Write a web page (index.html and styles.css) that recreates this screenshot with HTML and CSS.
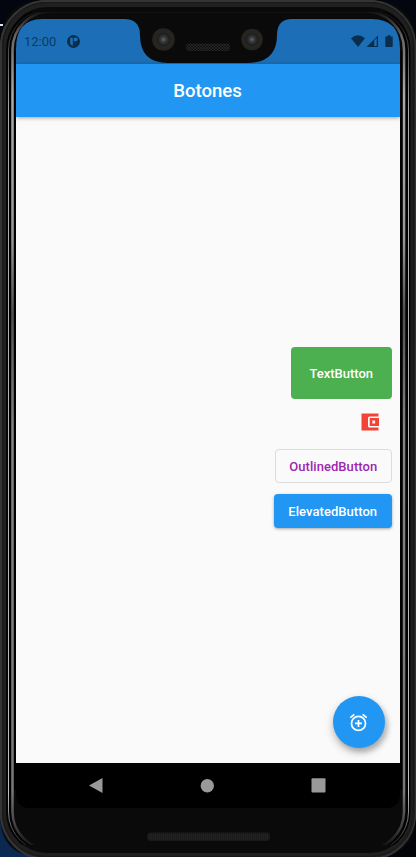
FILE: index.html
```
<!DOCTYPE html>
<html lang="es">
<head>
<meta charset="utf-8">
<title>Botones</title>
<link rel="stylesheet" href="styles.css">
</head>
<body>
<div class="phone">
  <div class="screen">
    <div class="status">
      <span class="time">12:00</span>
      <svg class="badge" width="13" height="13" viewBox="0 0 13 13"><circle cx="6.500" cy="6.500" r="6.500" fill="#082f4d"/><path d="M3.200 2.800h2.600v8q-2.600-.5-2.600-2.800zM6.800 2.800h2.700q1.200.3 1.200 1.700 0 1.800-1.900 1.800h-2z" fill="#1c6fb6"/></svg>
      <span class="spacer"></span>
      <svg class="system" width="42" height="13" viewBox="0 0 42 13" fill="#082f4d"><path d="M0 3.200Q7-2.600 14 3.200L7 12z"/><path fill-rule="evenodd" d="M15.500 12L27 .5V12zM23.300 5.300V11h2.400V3z"/><path d="M34.800 1.500h1.700V.3h3v1.200h1.700q.5 0 .5.500v9.500q0 .5-.5.500h-6.400q-.5 0-.5-.5V2q0-.5.500-.5z"/></svg>
    </div>
    <header class="appbar"><h1>Botones</h1></header>
    <main class="content">
      <button class="btn text">TextButton</button>
      <button class="wallet" aria-label="Cartera"><svg width="18" height="18" viewBox="0 0 18 18"><path d="M.5.500H17.500V3.500H8.500Q7 3.500 7 5v8q0 1.500 1.500 1.500h9v3H.5z" fill="#f44336"/><path fill-rule="evenodd" d="M8.700 5H18v8H8.700zM11.300 7.600v2.800h2.800V7.600z" fill="#f44336"/></svg></button>
      <button class="btn outlined">OutlinedButton</button>
      <button class="btn elevated">ElevatedButton</button>
      <button class="fab" aria-label="Alarma"><svg width="21" height="21" viewBox="0 0 24 24" fill="#fff"><path d="M7.880 3.390L6.600 1.860 2 5.710l1.290 1.530 4.590-3.850zM22 5.720l-4.600-3.860-1.290 1.530 4.600 3.860L22 5.720zM12 4a9 9 0 1 0 0 18 9 9 0 0 0 0-18zm0 16a7 7 0 1 1 0-14 7 7 0 0 1 0 14zm1-11h-2v3H8v2h3v3h2v-3h3v-2h-3V9z"/></svg></button>
    </main>
    <nav class="nav">
      <svg width="14" height="16" viewBox="0 0 14 16"><path d="M0 7.500L13.500 0v15z" fill="#999"/></svg>
      <svg width="14" height="14" viewBox="0 0 14 14"><circle cx="7.300" cy="6.700" r="6.700" fill="#999"/></svg>
      <svg width="15" height="15" viewBox="0 0 15 15"><rect x=".5" y=".3" width="14" height="14.300" rx="1" fill="#999"/></svg>
    </nav>
  </div>
  <svg class="frame" width="416" height="857" viewBox="0 0 416 857">
    <defs>
      <linearGradient id="shine" gradientUnits="userSpaceOnUse" x1="0" y1="11" x2="0" y2="850"><stop offset="0" stop-color="#111"/><stop offset=".03" stop-color="#666"/><stop offset=".1" stop-color="#aaa"/><stop offset=".27" stop-color="#999"/><stop offset=".36" stop-color="#505050"/><stop offset=".5" stop-color="#858585"/><stop offset=".93" stop-color="#777"/><stop offset=".98" stop-color="#333"/><stop offset="1" stop-color="#090909"/></linearGradient>
      <linearGradient id="thin" gradientUnits="userSpaceOnUse" x1="0" y1="10" x2="0" y2="852"><stop offset="0" stop-color="#111"/><stop offset=".12" stop-color="#aaa"/><stop offset=".93" stop-color="#c0c0c0"/><stop offset="1" stop-color="#181818"/></linearGradient>
      <pattern id="mesh" width="3" height="3" patternUnits="userSpaceOnUse"><rect width="3" height="3" fill="#0f0f0f"/><path d="M0 0l3 3M3 0L0 3" stroke="#303030" stroke-width=".6"/></pattern>
      <radialGradient id="lens"><stop offset="0" stop-color="#6b625f"/><stop offset=".25" stop-color="#34383a"/><stop offset=".55" stop-color="#1b1d1e"/><stop offset=".65" stop-color="#292622"/><stop offset="1" stop-color="#26221d"/></radialGradient>
      <clipPath id="sides"><path d="M0 12H416V845H0z"/></clipPath>
    </defs>
    <path fill="#0a0a0a" fill-rule="evenodd" d="M46 0H370Q416 0 416 46V814Q416 857 373 857H42Q0 857 0 814V46Q0 0 46 0zM16 49Q16 19 42 19H124Q140 19 140 35Q140 63 168 63H247Q277 63 277 35Q277 19 292 19H372Q400 19 400 49V794Q400 808 386 808H30Q16 808 16 794z"/>
    <g fill="none">
      <rect x="1" y="1" width="414" height="858" rx="46" stroke="#343434" stroke-width="2.500"/>
      <rect x="4.500" y="4.500" width="408" height="851" rx="43" stroke="#202020" stroke-width="5"/>
      <rect x="2.800" y="2.500" width="410.500" height="854" rx="44" stroke="#151515" stroke-width=".8"/>
      <g clip-path="url(#sides)">
        <rect x="7" y="9" width="402.500" height="844" rx="41" stroke="#050505" stroke-width="2"/>
        <rect x="10" y="10.500" width="397" height="841" rx="39" stroke="#020202" stroke-width="2"/>
        <rect x="8.500" y="10" width="400" height="842" rx="40" stroke="url(#thin)"/>
        <rect x="12.500" y="11.500" width="391.500" height="838" rx="38" stroke="url(#shine)" stroke-width="2.500"/>
        <path d="M15 51V790M401.300 51V790" stroke="#000" stroke-width="2"/>
      </g>
    </g>
    <circle cx="163.500" cy="39.500" r="11.300" fill="url(#lens)"/><circle cx="252" cy="39.500" r="10.800" fill="url(#lens)"/>
    <rect x="186" y="43.500" width="44" height="7.500" rx="3" fill="url(#mesh)"/>
    <rect x="147" y="832.500" width="123" height="8.500" rx="4" fill="#1a1a1a"/><path d="M149 836.700H268" stroke="#232323" stroke-width="6" stroke-dasharray="1 1"/>
  </svg>
</div>
</body>
</html>
```
FILE: styles.css
```
* { box-sizing: border-box; }
body {
  margin: 0;
  width: 416px;
  height: 857px;
  overflow: hidden;
  background: linear-gradient(#03060f 0, #01030a 50%, #0b2850 97%);
  font-family: Roboto, "Liberation Sans", sans-serif;
}
body::before {
  content: "";
  position: absolute;
  left: 0;
  top: 24px;
  width: 3px;
  height: 2px;
  background: #dce6f5;
}
body::after {
  content: "";
  position: absolute;
  right: 0;
  bottom: 0;
  width: 40px;
  height: 40px;
  background: #02040a;
}
.phone { position: relative; height: 857px; padding: 19px 16px 49px; }
.frame { position: absolute; inset: 0; z-index: 2; pointer-events: none; }
.screen { display: flex; flex-direction: column; height: 789px; background: #fafafa; }
.status {
  display: flex;
  align-items: center;
  height: 45px;
  padding: 0 8px;
  background: #1c6fb6;
  color: #0b3a62;
}
.time { width: 42.500px; padding-top: 1px; font-size: 13px; line-height: 16px; }
.spacer { flex: 1; }
.system { margin-right: -1px; }
.appbar {
  display: flex;
  flex: none;
  align-items: center;
  justify-content: center;
  height: 53px;
  padding: 1px 1px 0 0;
  background: #2196f3;
  color: #fff;
  box-shadow: 0 1px 4px rgba(0, 0, 0, .35);
}
.appbar h1 { margin: 0; font-size: 18.600px; font-weight: 500; line-height: 24px; }
.content {
  display: flex;
  flex: 1;
  flex-direction: column;
  align-items: flex-end;
  padding: 230px 8px 0 0;
}
button { display: flex; align-items: center; justify-content: center; padding: 0; border: 0; background: none; }
.btn { border-radius: 4px; font: 500 13px/16px Roboto, "Liberation Sans", sans-serif; }
.text { width: 101.500px; height: 52px; padding-top: 1px; background: #4caf50; color: #fff; }
.wallet { width: 44px; height: 44px; padding-top: 1px; }
.outlined { width: 117.500px; height: 34px; margin-top: 6px; padding-top: 1px; border: 1px solid #dcdcdc; color: #9c27b0; }
.elevated { width: 118.500px; height: 34px; margin-top: 11px; padding-top: 1px; background: #2196f3; color: #fff; box-shadow: 0 1px 3px rgba(0, 0, 0, .35); }
.outlined, .elevated { letter-spacing: .05px; }
.fab {
  width: 52px;
  height: 52px;
  margin: auto 7.500px 15px 0;
  padding-right: 1px;
  border-radius: 50%;
  background: #2196f3;
  box-shadow: 0 4px 9px rgba(0, 0, 0, .26), 3px 4px 5px rgba(0, 0, 0, .15);
}
.nav {
  display: flex;
  align-items: center;
  justify-content: space-between;
  height: 45px;
  padding: 0 74px 0 73px;
  background: #000;
}
```
